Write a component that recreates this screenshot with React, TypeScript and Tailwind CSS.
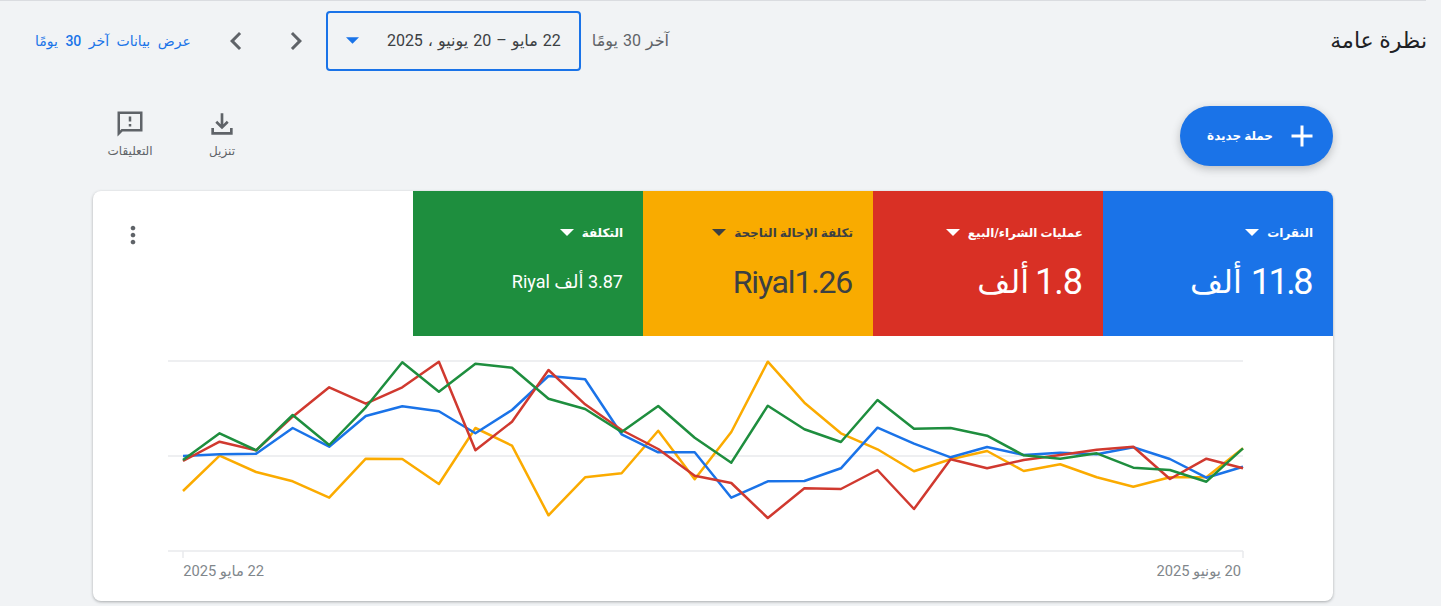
import type { ReactNode } from "react";

const xAt = (i: number) => 183 + (1060 / 29) * i;

const series = [
  {
    color: "#fbab00",
    ys: [491, 455.7, 472, 481.3, 497.7, 458.7, 459, 484, 428, 445.7, 515.3, 477.3, 473.3, 430.7, 479.3, 432, 361.7, 402.7, 433.3, 449.3, 471.3, 459.3, 451, 471, 464.3, 477.3, 486.7, 477.3, 477.3, 448.3],
  },
  {
    color: "#1a73e8",
    ys: [456, 454.3, 453.7, 428, 446.7, 416, 406.3, 411.3, 433.3, 410, 376, 379.3, 434.3, 452.3, 452.3, 497.7, 481.3, 481, 468.3, 427.7, 443.7, 457.3, 447, 455, 452.7, 454.3, 447.3, 459, 477.7, 466.7],
  },
  {
    color: "#d0392f",
    ys: [461, 441.7, 450.3, 416.7, 387.3, 403.7, 387.3, 361.7, 450.3, 421.7, 370, 404.3, 430, 449, 475.7, 483, 518, 488.3, 489, 470, 509, 459.3, 468.3, 460, 455, 449.7, 446.7, 479, 458.7, 468.3],
  },
  {
    color: "#1e8e3e",
    ys: [460, 433.3, 450.3, 415, 445, 407.3, 362.3, 391.7, 363.7, 367.7, 398.7, 409, 432, 406, 437.7, 462.7, 405.7, 429.3, 442, 400, 428.7, 428, 435.7, 455.3, 458.7, 453.3, 467.7, 470, 481.7, 448.3],
  },
];

function Caret({ className }: { className: string }) {
  return (
    <svg viewBox="0 0 10 5" className={className} aria-hidden>
      <path d="M0 0h10L5 5z" fill="currentColor" />
    </svg>
  );
}

function Chevron({ d }: { d: string }) {
  return (
    <svg viewBox="0 0 24 24" className="h-9 w-9 text-[#5f6368]" aria-hidden>
      <path d={d} fill="currentColor" />
    </svg>
  );
}

function Tile({
  label,
  bg,
  text,
  size,
  children,
}: {
  label: string;
  bg: string;
  text: string;
  size: string;
  children: ReactNode;
}) {
  return (
    <div className={`flex h-[145px] w-[230px] flex-col px-5 ${bg} ${text}`}>
      <div className="flex h-[80px] items-center gap-2 pt-[3px] text-xs font-bold">
        <span>{label}</span>
        <Caret className="h-[7px] w-[14px]" />
      </div>
      <div className={`flex h-[22px] items-center whitespace-nowrap ${size}`}>{children}</div>
    </div>
  );
}

function Chart() {
  return (
    <svg viewBox="93 336 1240 265" className="block h-[265px] w-[1240px]" aria-hidden>
      {[361, 456, 551].map((y) => (
        <line key={y} x1="168" x2="1243" y1={y} y2={y} stroke="#e8eaed" strokeWidth="1.5" />
      ))}
      <line x1="183" x2="183" y1="551" y2="558" stroke="#e8eaed" strokeWidth="1.5" />
      <line x1="1243" x2="1243" y1="551" y2="558" stroke="#e8eaed" strokeWidth="1.5" />
      {series.map((s) => (
        <polyline
          key={s.color}
          points={s.ys.map((y, i) => `${xAt(i).toFixed(1)},${y}`).join(" ")}
          fill="none"
          stroke={s.color}
          strokeWidth="2.5"
          strokeLinejoin="round"
        />
      ))}
      <text x="264" y="576" direction="rtl" fontSize="14.7" fill="#80868b" fontFamily="Roboto, 'DejaVu Sans', sans-serif">
        22 مايو 2025
      </text>
      <text x="1241" y="576" direction="rtl" fontSize="14.7" fill="#80868b" fontFamily="Roboto, 'DejaVu Sans', sans-serif">
        20 يونيو 2025
      </text>
    </svg>
  );
}

export default function App() {
  return (
    <div dir="rtl" className="h-[606px] w-[1441px] overflow-hidden bg-[#f1f3f5] font-['Roboto','DejaVu_Sans',sans-serif]">
      <div className="mr-[15px] h-px bg-[#dadce0]" />

      <div className="flex h-[79px] items-center justify-between pr-[14px] pl-[35px]">
        <h1 className="text-[22px] font-normal text-[#202124]">نظرة عامة</h1>
        <div className="flex items-center">
          <span className="text-base text-[#5f6368] [word-spacing:1px]">آخر 30 يومًا</span>
          <div className="mr-[11px] flex h-[60px] w-[255px] items-center justify-between rounded border-2 border-[#1a73e8] pr-[18px] pl-[18px] text-base text-[#3c4043]">
            <span className="[word-spacing:1px]">22 مايو – 20 يونيو ، 2025</span>
            <Caret className="h-[7px] w-[13px] text-[#1a73e8]" />
          </div>
          <div className="mr-[12px] flex gap-6">
            <Chevron d="M8.59 16.59 10 18l6-6-6-6-1.41 1.41L13.17 12z" />
            <Chevron d="M15.41 7.41 14 6l-6 6 6 6 1.41-1.41L10.83 12z" />
          </div>
          <a className="mr-[27px] text-sm font-medium text-[#1a73e8] [word-spacing:4px]">عرض بيانات آخر 30 يومًا</a>
        </div>
      </div>

      <div className="mt-[26px] mr-[108px] ml-[93px] flex h-[60px] items-center justify-between">
        <button className="flex h-[60px] w-[153px] items-center gap-[11px] rounded-full bg-[#1a73e8] pr-[13px] text-white shadow-[0_3px_8px_rgba(60,64,67,0.3)]">
          <svg viewBox="0 0 24 24" className="h-9 w-9" aria-hidden>
            <path d="M19 13h-6v6h-2v-6H5v-2h6V5h2v6h6z" fill="currentColor" />
          </svg>
          <span className="text-xs font-bold">حملة جديدة</span>
        </button>
        <div className="flex gap-[18px] pb-[6px]">
          {[
            {
              label: "تنزيل",
              size: "h-8 w-8",
              d: "M18 15v3H6v-3H4v5h16v-5h-2zm-1-4-1.41-1.41L13 12.17V4h-2v8.17L8.41 9.59 7 11l5 5 5-5z",
            },
            {
              label: "التعليقات",
              size: "my-px h-[30px] w-[30px]",
              d: "M22 2H2.01L2 22l4-4h16V2zm-2 14H5.17L4 17.17V4h16v12zM11 12h2v2h-2zm0-6h2v4h-2z",
            },
          ].map((a) => (
            <div key={a.label} className="flex w-[74px] flex-col items-center">
              <svg viewBox="0 0 24 24" className={`${a.size} text-[#5f6368]`} aria-hidden>
                <path d={a.d} fill="currentColor" />
              </svg>
              <span className="mt-[3px] text-xs text-[#5f6368]">{a.label}</span>
            </div>
          ))}
        </div>
      </div>

      <div className="mt-[25px] mr-[108px] ml-[93px] h-[410px] overflow-hidden rounded-lg bg-white shadow-[0_1px_3px_rgba(60,64,67,0.4)]">
        <div className="flex">
          <Tile label="النقرات" bg="bg-[#1a73e8]" text="text-white" size="gap-[9px]">
            <span className="mr-[2px] text-[36px] tracking-[-2.5px]">11.8</span>
            <span className="text-[32px]">ألف</span>
          </Tile>
          <Tile label="عمليات الشراء/البيع" bg="bg-[#d93025]" text="text-white" size="gap-[6px]">
            <span className="mr-px text-[36px] tracking-[-1px]">1.8</span>
            <span className="text-[32px]">ألف</span>
          </Tile>
          <Tile label="تكلفة الإحالة الناجحة" bg="bg-[#f9ab00]" text="text-[#3c4043]" size="text-[32px] tracking-[-1.2px]">
            <span className="mr-px">Riyal1.26</span>
          </Tile>
          <Tile label="التكلفة" bg="bg-[#1e8e3e]" text="text-white" size="text-lg">
            3.87 ألف Riyal
          </Tile>
          <div className="flex flex-1 justify-end pt-[30px] pl-[26px]">
            <svg viewBox="0 0 24 24" className="h-7 w-7 text-[#5f6368]" aria-hidden>
              <path
                d="M12 8c1.1 0 2-.9 2-2s-.9-2-2-2-2 .9-2 2 .9 2 2 2zm0 2c-1.1 0-2 .9-2 2s.9 2 2 2 2-.9 2-2-.9-2-2-2zm0 6c-1.1 0-2 .9-2 2s.9 2 2 2 2-.9 2-2-.9-2-2-2z"
                fill="currentColor"
              />
            </svg>
          </div>
        </div>
        <Chart />
      </div>
    </div>
  );
}
